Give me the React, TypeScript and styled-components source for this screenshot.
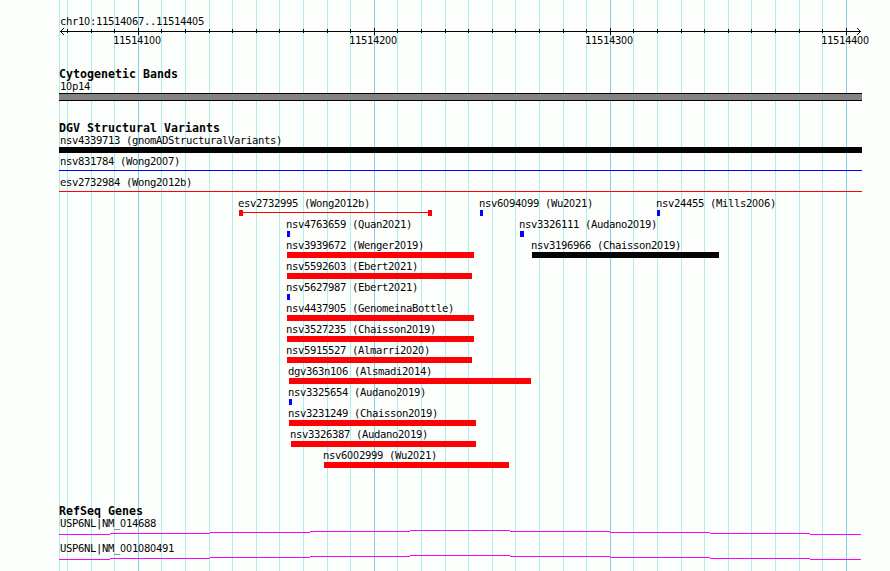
import React from "react";
import styled, { createGlobalStyle } from "styled-components";

const ink = "#040204";
const red = "#fc0204";
const blue = "#0402fc";
const magenta = "#fc02fc";
const LEFT = 59;

const GlobalStyle = createGlobalStyle`
  body { margin: 0; background: #fcfefc; }
`;

const Page = styled.main`
  display: grid;
  width: 890px;
  height: 571px;
  overflow: hidden;
  background: #fcfefc;
  color: ${ink};
`;

const GridLines = styled.svg`
  grid-area: 1 / 1;
  display: block;
`;

const Tracks = styled.div`
  grid-area: 1 / 1;
  position: relative;
  display: flex;
  flex-direction: column;
  padding-left: ${LEFT}px;
`;

const LabelText = styled.span`
  display: block;
  height: 13px;
  font: 10.6px/13px "DejaVu Sans Mono", monospace;
  letter-spacing: -0.381px;
  white-space: pre;
`;

const Zero = styled.span`
  font-family: "DejaVu Sans Condensed", "DejaVu Sans", sans-serif;
  font-stretch: condensed;
  font-size: 10.6px;
  letter-spacing: -0.07px;
`;

const Header = styled.header`
  height: 54px;
  padding-top: 14px;
  box-sizing: border-box;
`;

const RangeLabel = styled.div`
  height: 13px;
  padding-left: 1px;

  ${LabelText} {
    line-height: 15px;
  }
`;

const Axis = styled.svg`
  display: block;
`;

const ScaleLabels = styled.div`
  display: flex;
  gap: 188px;
  margin: -1px 0 0 54px;
`;

const ScaleLabel = styled.div`
  width: 48px;
  flex: none;
`;

const Track = styled.section<{ $height: number }>`
  height: ${(p) => p.$height}px;
  flex: none;
`;

const TrackTitle = styled.h2`
  margin: 0;
  height: 13px;
  font: bold 11.6px/15px "DejaVu Sans Mono", monospace;
  letter-spacing: 0.017px;
  white-space: pre;
`;

const Row = styled.div<{ $height: number }>`
  display: grid;
  height: ${(p) => p.$height}px;
`;

const FeatureBox = styled.div<{ $start: number; $inset: number }>`
  grid-area: 1 / 1;
  margin-left: ${(p) => p.$start - LEFT}px;

  ${LabelText} {
    margin-left: ${(p) => p.$inset}px;
  }
`;

const Bar = styled.div<{ $width: number; $color: string }>`
  width: ${(p) => p.$width}px;
  height: 6px;
  background: ${(p) => p.$color};
`;

const ThinLine = styled.div<{ $width: number; $color: string }>`
  width: ${(p) => p.$width}px;
  height: 1px;
  margin-top: 2px;
  background: ${(p) => p.$color};
`;

const CappedLine = styled.div<{ $width: number; $color: string }>`
  display: flex;
  align-items: flex-start;
  width: ${(p) => p.$width}px;
  height: 6px;

  &::before,
  &::after {
    content: "";
    width: 4px;
    height: 6px;
    background: ${(p) => p.$color};
  }
`;

const Span = styled.i<{ $color: string }>`
  flex: 1;
  height: 1px;
  margin-top: 2px;
  background: ${(p) => p.$color};
`;

const Band = styled.div`
  box-sizing: border-box;
  width: 803px;
  height: 8px;
  border: solid ${ink};
  border-width: 1px 0;
  background: #848284;
`;

const GeneRow = styled.div`
  height: 25px;
`;

const GeneLabel = styled.div`
  padding-left: 1px;
`;

const GeneLine = styled.svg`
  display: block;
`;

const minorLines = [
  59, 67, 91, 114, 161, 185, 209, 232, 256, 279, 303, 327, 350, 397, 421, 445, 468,
  492, 515, 539, 563, 586, 633, 657, 681, 704, 728, 751, 775, 799, 822,
];
const majorLines = [138, 374, 610, 846];

type Kind = "bar" | "thin" | "capped";
type Feature = { name: string; start: number; end: number; color: string; kind?: Kind };

const rows: Feature[][] = [
  [{ name: "nsv4339713 (gnomADStructuralVariants)", start: 59, end: 862, color: ink }],
  [{ name: "nsv831784 (Wong2007)", start: 59, end: 862, color: blue, kind: "thin" }],
  [{ name: "esv2732984 (Wong2012b)", start: 59, end: 862, color: red, kind: "thin" }],
  [
    { name: "esv2732995 (Wong2012b)", start: 239, end: 432, color: red, kind: "capped" },
    { name: "nsv6094099 (Wu2021)", start: 480, end: 483, color: blue },
    { name: "nsv24455 (Mills2006)", start: 657, end: 660, color: blue },
  ],
  [
    { name: "nsv4763659 (Quan2021)", start: 287, end: 290, color: blue },
    { name: "nsv3326111 (Audano2019)", start: 520, end: 524, color: blue },
  ],
  [
    { name: "nsv3939672 (Wenger2019)", start: 287, end: 474, color: red },
    { name: "nsv3196966 (Chaisson2019)", start: 532, end: 719, color: ink },
  ],
  [{ name: "nsv5592603 (Ebert2021)", start: 287, end: 472, color: red }],
  [{ name: "nsv5627987 (Ebert2021)", start: 287, end: 290, color: blue }],
  [{ name: "nsv4437905 (GenomeinaBottle)", start: 287, end: 474, color: red }],
  [{ name: "nsv3527235 (Chaisson2019)", start: 287, end: 474, color: red }],
  [{ name: "nsv5915527 (Almarri2020)", start: 287, end: 472, color: red }],
  [{ name: "dgv363n106 (Alsmadi2014)", start: 289, end: 531, color: red }],
  [{ name: "nsv3325654 (Audano2019)", start: 289, end: 292, color: blue }],
  [{ name: "nsv3231249 (Chaisson2019)", start: 289, end: 476, color: red }],
  [{ name: "nsv3326387 (Audano2019)", start: 291, end: 476, color: red }],
  [{ name: "nsv6002999 (Wu2021)", start: 324, end: 509, color: red }],
];

// Zeros are set without the inner mark of the monospaced face.
function Label({ children }: { children: string }) {
  return (
    <LabelText>
      {children.split(/(0+)/).map((part, i) =>
        part.startsWith("0") ? <Zero key={i}>{part}</Zero> : part
      )}
    </LabelText>
  );
}

function FeatureView({ name, start, end, color, kind = "bar" }: Feature) {
  const width = end - start;
  return (
    <FeatureBox $start={start} $inset={start === LEFT ? 1 : -1}>
      <Label>{name}</Label>
      {kind === "bar" && <Bar $width={width} $color={color} />}
      {kind === "thin" && <ThinLine $width={width} $color={color} />}
      {kind === "capped" && (
        <CappedLine $width={width} $color={color}>
          <Span $color={color} />
        </CappedLine>
      )}
    </FeatureBox>
  );
}

function Gene({ name }: { name: string }) {
  return (
    <GeneRow>
      <GeneLabel>
        <Label>{name}</Label>
      </GeneLabel>
      <GeneLine width="803" height="6" shapeRendering="crispEdges">
        <path
          d="M0 4.5H51M51 3.5H151M151 2.5H251M251 1.5H351M351 .5H451M451 1.5H551M551 2.5H651M651 3.5H751M751 4.5H802"
          stroke={magenta}
        />
      </GeneLine>
    </GeneRow>
  );
}

export default function App() {
  return (
    <>
      <GlobalStyle />
      <Page>
        <GridLines width="890" height="571" shapeRendering="crispEdges">
          {minorLines.map((x) => (
            <rect key={x} x={x} width="1" height="571" fill="#aceeec" />
          ))}
          {majorLines.map((x) => (
            <rect key={x} x={x} width="1" height="571" fill="#84ceec" />
          ))}
        </GridLines>
        <Tracks>
          <Header>
            <RangeLabel>
              <Label>chr10:11514067..11514405</Label>
            </RangeLabel>
            <Axis width="803" height="8" viewBox="59 27 803 8" shapeRendering="crispEdges">
              <path d="M60 31.5H861" stroke={ink} />
              {minorLines.slice(1).map((x) => (
                <rect key={x} x={x} y="29" width="1" height="4" fill={ink} />
              ))}
              {majorLines.map((x) => (
                <rect key={x} x={x} y="28" width="1" height="7" fill={ink} />
              ))}
              <path
                d="M61 30.5h1M62 29.5h1M63 28.5h1M61 32.5h1M62 33.5h1M63 34.5h1M859 30.5h1M858 29.5h1M857 28.5h1M859 32.5h1M858 33.5h1M857 34.5h1"
                stroke={ink}
              />
            </Axis>
            <ScaleLabels>
              {["11514100", "11514200", "11514300", "11514400"].map((n) => (
                <ScaleLabel key={n}>
                  <Label>{n}</Label>
                </ScaleLabel>
              ))}
            </ScaleLabels>
          </Header>
          <Track $height={13} />
          <Track $height={54}>
            <TrackTitle>Cytogenetic Bands</TrackTitle>
            <FeatureBox $start={LEFT} $inset={1}>
              <Label>10p14</Label>
            </FeatureBox>
            <Band />
          </Track>
          <Track $height={383}>
            <TrackTitle>DGV Structural Variants</TrackTitle>
            {rows.map((features, i) => (
              <Row key={i} $height={21}>
                {features.map((f) => (
                  <FeatureView key={f.name} {...f} />
                ))}
              </Row>
            ))}
          </Track>
          <Track $height={67}>
            <TrackTitle>RefSeq Genes</TrackTitle>
            <Gene name="USP6NL|NM_014688" />
            <Gene name="USP6NL|NM_001080491" />
          </Track>
        </Tracks>
      </Page>
    </>
  );
}
